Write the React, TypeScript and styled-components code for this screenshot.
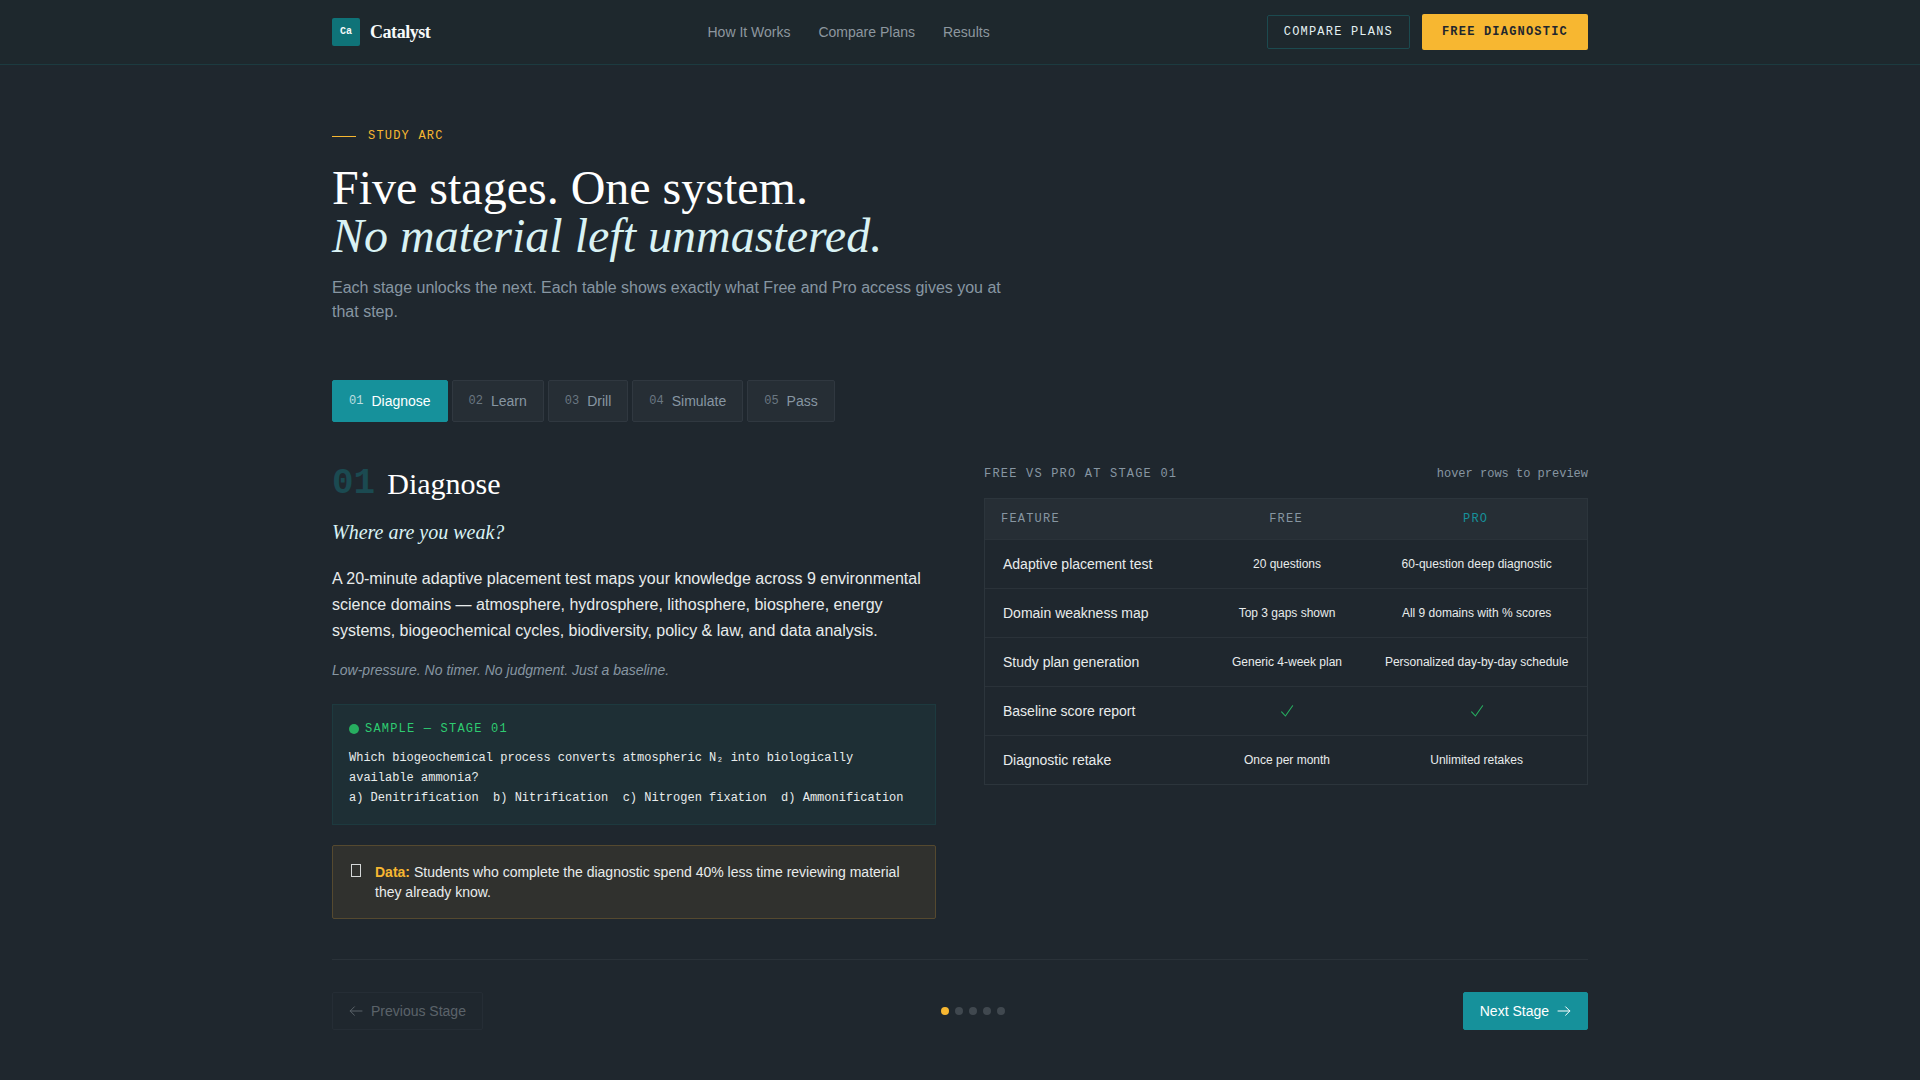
import React, { useState } from "react";
import styled, { createGlobalStyle } from "styled-components";

const sans = `"Liberation Sans", Arial, sans-serif`;
const serif = `"Liberation Serif", "Times New Roman", serif`;
const mono = `"Liberation Mono", "Courier New", monospace`;

const Global = createGlobalStyle`
  *, *::before, *::after { box-sizing: border-box; }
  body {
    margin: 0;
    background: #1f272e;
    color: #e8ecec;
    font-family: ${sans};
    font-size: 16px;
  }
  h1, h2, p { margin: 0; }
  button { font: inherit; cursor: pointer; }
  a { color: inherit; text-decoration: none; }
`;

const Wrap = styled.div`
  max-width: 1320px;
  margin: 0 auto;
  padding: 0 32px;
`;

const Header = styled.header`
  background: #1e282d;
  border-bottom: 1px solid #1c3b40;
`;

const HeaderRow = styled(Wrap)`
  display: flex;
  align-items: center;
  justify-content: space-between;
  min-height: 64px;
`;

const Brand = styled.a`
  display: flex;
  align-items: center;
  gap: 10px;
  font: 700 18px/24px ${serif};
  letter-spacing: -0.025em;
  color: #f7fafa;
`;

const Mark = styled.span`
  display: grid;
  place-items: center;
  width: 28px;
  height: 28px;
  border-radius: 2px;
  background: #0f7378;
  font: 700 10px/14px ${mono};
  letter-spacing: 0;
`;

const Nav = styled.nav`
  display: flex;
  gap: 28px;
  font-size: 14px;
  line-height: 20px;
  color: #8d979f;
`;

const Actions = styled.div`
  display: flex;
  align-items: center;
  gap: 12px;
`;

const HeaderButton = styled.button<{ $primary?: boolean }>`
  padding: ${(p) => (p.$primary ? "10px 20px" : "8px 16px")};
  border: ${(p) => (p.$primary ? "none" : "1px solid #1c4a4f")};
  border-radius: 2px;
  background: ${(p) => (p.$primary ? "#f7b731" : "transparent")};
  color: ${(p) => (p.$primary ? "#1f272e" : "#e4f1f2")};
  font: ${(p) => (p.$primary ? 700 : 400)} 12px/16px ${mono};
  letter-spacing: 0.1em;
  text-transform: uppercase;
`;

const Main = styled(Wrap).attrs({ as: "main" })`
  padding-top: 64px;
  padding-bottom: 48px;
`;

const Eyebrow = styled.p`
  display: flex;
  align-items: center;
  gap: 12px;
  margin-bottom: 20px;
  color: #f7b731;
  font: 12px/15px ${mono};
  letter-spacing: 0.1em;
  text-transform: uppercase;

  &::before {
    content: "";
    width: 24px;
    height: 1px;
    background: currentColor;
  }
`;

const Title = styled.h1`
  margin-bottom: 16px;
  color: #fff;
  font: 400 48px/48px ${serif};

  em {
    display: block;
    color: #d9f2f4;
  }
`;

const Lead = styled.p`
  max-width: 680px;
  color: #8796a2;
  line-height: 24px;
`;

const Tabs = styled.div`
  display: flex;
  flex-wrap: wrap;
  gap: 4px;
  margin: 56px 0 40px;
`;

const Tab = styled.button<{ $active: boolean }>`
  display: flex;
  align-items: center;
  gap: 8px;
  padding: 10px 16px;
  border: 1px solid ${(p) => (p.$active ? "#16919b" : "#303840")};
  border-radius: 2px;
  background: ${(p) => (p.$active ? "#16919b" : "#262e35")};
  color: ${(p) => (p.$active ? "#fff" : "#8796a2")};
  font-size: 14px;
  line-height: 20px;
`;

const TabNumber = styled.span`
  font-family: ${mono};
  font-size: 12px;
  opacity: 0.7;
`;

const Columns = styled.div`
  display: grid;
  grid-template-columns: repeat(auto-fit, minmax(480px, 1fr));
  align-items: start;
  gap: 48px;
`;

const StageHead = styled.div`
  display: flex;
  align-items: center;
  gap: 12px;
  margin-bottom: 12px;
`;

const StageNumber = styled.span`
  color: #1b4a51;
  font: 700 36px/36px ${mono};
`;

const StageName = styled.h2`
  color: #fff;
  font: 400 30px/44px ${serif};
`;

const Question = styled.p`
  margin-bottom: 20px;
  color: #d9f2f4;
  font: italic 20px/28px ${serif};
`;

const Body = styled.p`
  margin-bottom: 16px;
  line-height: 26px;
`;

const Note = styled.p`
  margin-bottom: 24px;
  color: #8796a2;
  font-size: 14px;
  font-style: italic;
  line-height: 20px;
`;

const Sample = styled.section`
  margin-bottom: 20px;
  padding: 16px;
  border: 1px solid #1d3a3f;
  background: #1e2f35;
  font: 12px/20px ${mono};
`;

const SampleLabel = styled.p`
  display: flex;
  align-items: center;
  gap: 6px;
  margin-bottom: 11px;
  color: #2ecc71;
  line-height: 16px;
  letter-spacing: 0.1em;
  text-transform: uppercase;

  &::before {
    content: "";
    width: 10px;
    height: 10px;
    border-radius: 50%;
    background: #27ae60;
  }
`;

const Options = styled.p`
  white-space: pre-wrap;
`;

const Callout = styled.aside`
  display: flex;
  gap: 12px;
  padding: 16px;
  border: 1px solid #55492f;
  border-radius: 2px;
  background: #30312e;
  font-size: 14px;
  line-height: 20px;

  strong { color: #f7b731; }
`;

const CalloutIcon = styled.span`
  display: flex;
  flex: none;
  justify-content: center;
  width: 14px;
  padding-top: 2px;

  &::before {
    content: "";
    width: 10px;
    height: 13px;
    border: 1px solid #d5d8d8;
  }
`;

const TableHead = styled.div`
  display: flex;
  justify-content: space-between;
  margin-bottom: 12px;
  color: #8796a2;
  font: 12px/24px ${mono};
`;

const TableTitle = styled.span`
  letter-spacing: 0.1em;
  text-transform: uppercase;
`;

const Table = styled.table`
  width: 100%;
  border: 1px solid #2c353c;
  border-spacing: 0;
  table-layout: fixed;
`;

const Th = styled.th<{ $width: string; $pro?: boolean }>`
  width: ${(p) => p.$width};
  padding: 12px 16px;
  border-bottom: 1px solid #2a3239;
  background: #262e35;
  color: ${(p) => (p.$pro ? "#16919b" : "#8796a2")};
  font: 400 12px/16px ${mono};
  letter-spacing: 0.1em;
  text-transform: uppercase;

  &:first-child { text-align: left; }
`;

const Row = styled.tr`
  &:hover { background: #232c33; }

  > * {
    height: 48px;
    padding: 0 16px 0 18px;
  }

  &:not(:last-child) > * {
    height: 49px;
    border-bottom: 1px solid #2a3239;
  }
`;

const Feature = styled.th`
  font-size: 14px;
  font-weight: 400;
  text-align: left;
`;

const Cell = styled.td`
  font-size: 12px;
  text-align: center;

  svg {
    display: block;
    margin: 0 auto;
  }
`;

const Footer = styled.nav`
  display: flex;
  align-items: center;
  justify-content: space-between;
  margin-top: 40px;
  padding-top: 32px;
  border-top: 1px solid #2a3239;
`;

const StepButton = styled.button<{ $primary?: boolean }>`
  display: flex;
  align-items: center;
  gap: 8px;
  padding: 8px 16px;
  border: 1px solid ${(p) => (p.$primary ? "#16919b" : "#303840")};
  border-radius: 2px;
  background: ${(p) => (p.$primary ? "#16919b" : "transparent")};
  color: ${(p) => (p.$primary ? "#fff" : "#b4bcc2")};
  font-size: 14px;
  line-height: 20px;

  &:disabled {
    opacity: 0.4;
    cursor: default;
  }
`;

const Dots = styled.div`
  display: flex;
  gap: 6px;
`;

const Dot = styled.button<{ $active: boolean }>`
  width: 8px;
  height: 8px;
  padding: 0;
  border: 0;
  border-radius: 50%;
  background: ${(p) => (p.$active ? "#f7b731" : "#40484f")};
`;

const Arrow = ({ d }: { d: string }) => (
  <svg width="14" height="14" viewBox="0 0 14 14" fill="none" stroke="currentColor" strokeLinecap="round" strokeLinejoin="round" aria-hidden="true">
    <path d={d} />
  </svg>
);

const Tick = () => (
  <svg width="14" height="14" viewBox="0 0 14 14" fill="none" stroke="#27ae60" strokeWidth="1.1" strokeLinecap="round" strokeLinejoin="round" role="img" aria-label="Included">
    <path d="M1.6 7.8 5.4 12 12.6 1.8" />
  </svg>
);

const stages = ["Diagnose", "Learn", "Drill", "Simulate", "Pass"];

const rows: [string, string | true, string | true][] = [
  ["Adaptive placement test", "20 questions", "60-question deep diagnostic"],
  ["Domain weakness map", "Top 3 gaps shown", "All 9 domains with % scores"],
  ["Study plan generation", "Generic 4-week plan", "Personalized day-by-day schedule"],
  ["Baseline score report", true, true],
  ["Diagnostic retake", "Once per month", "Unlimited retakes"],
];

const value = (entry: string | true) => (entry === true ? <Tick /> : entry);

export default function App() {
  const [stage, setStage] = useState(0);
  const number = `0${stage + 1}`;

  return (
    <>
      <Global />
      <Header>
        <HeaderRow>
          <Brand href="#">
            <Mark>Ca</Mark>
            Catalyst
          </Brand>
          <Nav>
            <a href="#how">How It Works</a>
            <a href="#compare">Compare Plans</a>
            <a href="#results">Results</a>
          </Nav>
          <Actions>
            <HeaderButton>Compare Plans</HeaderButton>
            <HeaderButton $primary>Free Diagnostic</HeaderButton>
          </Actions>
        </HeaderRow>
      </Header>
      <Main>
        <Eyebrow>Study Arc</Eyebrow>
        <Title>
          Five stages. One system.
          <em>No material left unmastered.</em>
        </Title>
        <Lead>
          Each stage unlocks the next. Each table shows exactly what Free and Pro access gives you at that step.
        </Lead>
        <Tabs>
          {stages.map((name, i) => (
            <Tab key={name} $active={i === stage} onClick={() => setStage(i)}>
              <TabNumber>0{i + 1}</TabNumber>
              {name}
            </Tab>
          ))}
        </Tabs>
        <Columns>
          <section>
            <StageHead>
              <StageNumber>{number}</StageNumber>
              <StageName>{stages[stage]}</StageName>
            </StageHead>
            <Question>Where are you weak?</Question>
            <Body>
              A 20-minute adaptive placement test maps your knowledge across 9 environmental science domains —
              atmosphere, hydrosphere, lithosphere, biosphere, energy systems, biogeochemical cycles, biodiversity,
              policy &amp; law, and data analysis.
            </Body>
            <Note>Low-pressure. No timer. No judgment. Just a baseline.</Note>
            <Sample>
              <SampleLabel>Sample — Stage {number}</SampleLabel>
              <p>Which biogeochemical process converts atmospheric N₂ into biologically available ammonia?</p>
              <Options>{"a) Denitrification  b) Nitrification  c) Nitrogen fixation  d) Ammonification"}</Options>
            </Sample>
            <Callout>
              <CalloutIcon aria-hidden="true" />
              <p>
                <strong>Data:</strong> Students who complete the diagnostic spend 40% less time reviewing material they
                already know.
              </p>
            </Callout>
          </section>
          <section>
            <TableHead>
              <TableTitle>Free vs Pro at stage {number}</TableTitle>
              <span>hover rows to preview</span>
            </TableHead>
            <Table>
              <thead>
                <tr>
                  <Th $width="37%">Feature</Th>
                  <Th $width="26%">Free</Th>
                  <Th $width="37%" $pro>Pro</Th>
                </tr>
              </thead>
              <tbody>
                {rows.map(([feature, free, pro]) => (
                  <Row key={feature}>
                    <Feature scope="row">{feature}</Feature>
                    <Cell>{value(free)}</Cell>
                    <Cell>{value(pro)}</Cell>
                  </Row>
                ))}
              </tbody>
            </Table>
          </section>
        </Columns>
        <Footer>
          <StepButton disabled={stage === 0} onClick={() => setStage(stage - 1)}>
            <Arrow d="M13 7H1.2M5.4 2.8 1.2 7l4.2 4.2" />
            Previous Stage
          </StepButton>
          <Dots>
            {stages.map((name, i) => (
              <Dot key={name} $active={i === stage} aria-label={name} onClick={() => setStage(i)} />
            ))}
          </Dots>
          <StepButton $primary disabled={stage === 4} onClick={() => setStage(stage + 1)}>
            Next Stage
            <Arrow d="M1 7h11.8M8.6 2.8 12.8 7l-4.2 4.2" />
          </StepButton>
        </Footer>
      </Main>
    </>
  );
}
